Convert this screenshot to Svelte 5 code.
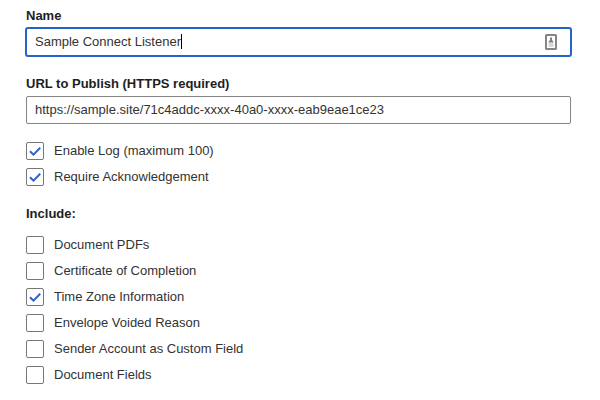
<script>
  import { onMount } from 'svelte';

  let name = $state('Sample Connect Listener');
  let url = $state('https://sample.site/71c4addc-xxxx-40a0-xxxx-eab9eae1ce23');
  let general = $state([
    { id: 'log', label: 'Enable Log (maximum 100)', checked: true },
    { id: 'ack', label: 'Require Acknowledgement', checked: true }
  ]);
  let include = $state([
    { id: 'pdfs', label: 'Document PDFs', checked: false },
    { id: 'certificate', label: 'Certificate of Completion', checked: false },
    { id: 'timezone', label: 'Time Zone Information', checked: true },
    { id: 'voided', label: 'Envelope Voided Reason', checked: false },
    { id: 'sender', label: 'Sender Account as Custom Field', checked: false },
    { id: 'fields', label: 'Document Fields', checked: false }
  ]);

  let nameInput;
  let caret = $state(0);

  // Keeps the drawn caret after the character at the insertion point.
  function placeCaret() {
    const context = document.createElement('canvas').getContext('2d');
    const style = getComputedStyle(nameInput);
    context.font = `${style.fontSize} ${style.fontFamily}`;
    const before = nameInput.value.slice(0, nameInput.selectionEnd);
    caret = Math.ceil(parseInt(style.paddingLeft) + 1 + context.measureText(before).width);
  }

  onMount(() => {
    nameInput.focus();
    nameInput.setSelectionRange(name.length, name.length);
    placeCaret();
  });
</script>

{#snippet option(item)}
  <label class="option" for={item.id}>
    <span class="box">
      <input id={item.id} type="checkbox" bind:checked={item.checked} />
      <svg viewBox="0 0 18 18" aria-hidden="true"><path d="M4 9.2 7.5 12.6 14.2 5.8" /></svg>
    </span>
    {item.label}
  </label>
{/snippet}

<form>
  <div class="field">
    <label class="title" for="name">Name</label>
    <div class="control">
      <input
        id="name"
        type="text"
        autocomplete="off"
        spellcheck="false"
        bind:this={nameInput}
        bind:value={name}
        oninput={placeCaret}
        onkeyup={placeCaret}
        onclick={placeCaret}
      />
      <span class="caret" style:left="{caret}px"></span>
      <svg class="contact" viewBox="0 0 12 16" aria-hidden="true">
        <rect x="1" y="1" width="10" height="14" rx="0.5" />
        <path class="person" d="M5 3.5h2v2.3l1.8 2.7H3.2L5 5.8z" />
        <path class="lines" d="M3.5 10h5M3.5 12h5" />
      </svg>
    </div>
  </div>

  <div class="field">
    <label class="title" for="url">URL to Publish (HTTPS required)</label>
    <div class="control">
      <input id="url" type="text" spellcheck="false" bind:value={url} />
    </div>
  </div>

  <div class="options">
    {#each general as item (item.id)}
      {@render option(item)}
    {/each}
  </div>

  <fieldset>
    <legend class="title">Include:</legend>
    <div class="options">
      {#each include as item (item.id)}
        {@render option(item)}
      {/each}
    </div>
  </fieldset>
</form>

<style>
  :global(body) {
    background: #fff;
  }

  form {
    display: flex;
    flex-direction: column;
    padding: 8px 29px 0 26px;
    color: #333;
    font: 13px/16px 'Liberation Sans', Arial, sans-serif;
  }

  .field {
    display: flex;
    flex-direction: column;
    gap: 4px;
    margin-bottom: 20px;
  }

  .title {
    padding: 0;
    color: #1e1e1e;
    font-weight: bold;
  }

  .control {
    position: relative;
    display: flex;
  }

  input[type='text'] {
    flex: 1;
    min-width: 0;
    height: 28px;
    box-sizing: border-box;
    padding: 0 8px 1px;
    border: 1px solid #858585;
    border-radius: 2px;
    outline: none;
    background: #fff;
    color: #333;
    font: inherit;
    caret-color: transparent;
  }

  #url {
    caret-color: #000;
  }

  input[type='text']:focus {
    border-color: #2463c7;
    box-shadow: 0 0 0 1px #2463c7;
  }

  .caret {
    display: none;
    position: absolute;
    top: 6px;
    width: 1px;
    height: 15px;
    background: #000;
  }

  #name:focus ~ .caret {
    display: block;
  }

  .contact {
    position: absolute;
    top: 6px;
    right: 14px;
    width: 12px;
    height: 16px;
    fill: none;
    stroke: #858585;
    stroke-width: 2;
  }

  .contact .person {
    fill: #808080;
    stroke: none;
  }

  .contact .lines {
    stroke: #b0b0b0;
    stroke-width: 1;
  }

  .options {
    display: flex;
    flex-direction: column;
    align-items: flex-start;
    gap: 8px;
  }

  .field + .options {
    margin-top: -2px;
  }

  .option {
    display: flex;
    align-items: center;
    gap: 10px;
    line-height: 18px;
  }

  .box {
    display: grid;
    width: 18px;
    height: 18px;
  }

  .box input,
  .box svg {
    grid-area: 1 / 1;
    width: 18px;
    height: 18px;
    margin: 0;
  }

  .box input {
    appearance: none;
    box-sizing: border-box;
    border: 1px solid #777;
    border-radius: 2px;
    background: #fff;
  }

  .box svg {
    visibility: hidden;
    pointer-events: none;
    fill: none;
    stroke: #3260cd;
    stroke-width: 2;
  }

  .box input:checked + svg {
    visibility: visible;
  }

  fieldset {
    min-width: 0;
    margin: 20px 0 0;
    padding: 0;
    border: 0;
  }

  legend {
    margin-bottom: 14px;
  }
</style>
